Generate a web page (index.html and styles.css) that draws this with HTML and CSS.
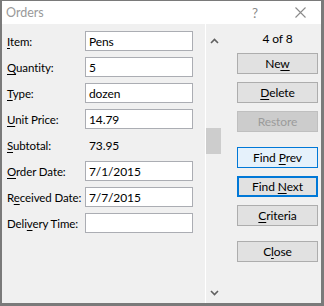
FILE: index.html
```html
<!DOCTYPE html>
<html>
<head>
<meta charset="utf-8">
<link rel="stylesheet" href="styles.css">
</head>
<body>
<div class="window">
  <div class="titlebar">
    <span class="title">Orders</span>
    <span class="help">?</span>
    <svg class="close-x" width="11" height="11" viewBox="0 0 11 11"><path d="M0.5 0.5 L10.5 10.5 M10.5 0.5 L0.5 10.5" stroke="#8a8a8a" stroke-width="1.1" fill="none"/></svg>
  </div>
  <div class="content">
    <div class="form">
      <label class="lbl"><span><u>I</u>tem:</span></label><div class="box">Pens</div>
      <label class="lbl"><span><u>Q</u>uantity:</span></label><div class="box">5</div>
      <label class="lbl"><span><u>T</u>ype:</span></label><div class="box">dozen</div>
      <label class="lbl"><span><u>U</u>nit Price:</span></label><div class="box">14.79</div>
      <label class="lbl"><span><u>S</u>ubtotal:</span></label><div class="value">73.95</div>
      <label class="lbl"><span><u>O</u>rder Date:</span></label><div class="box">7/1/2015</div>
      <label class="lbl"><span>R<u>e</u>ceived Date:</span></label><div class="box">7/7/2015</div>
      <label class="lbl"><span>Deli<u>v</u>ery Time:</span></label><div class="box"></div>
    </div>
    <div class="scroll">
      <svg class="arrow up" width="9" height="6" viewBox="0 0 9 6"><path d="M1 5 L4.5 1.5 L8 5" stroke="#606060" stroke-width="1.6" fill="none"/></svg>
      <div class="thumb"></div>
      <svg class="arrow down" width="9" height="6" viewBox="0 0 9 6"><path d="M1 1 L4.5 4.5 L8 1" stroke="#606060" stroke-width="1.6" fill="none"/></svg>
    </div>
    <div class="side">
      <div class="counter">4 of 8</div>
      <div class="btn"><span>Ne<u>w</u></span></div>
      <div class="btn"><span><u>D</u>elete</span></div>
      <div class="btn disabled"><span>Restore</span></div>
      <div class="btn hover gap"><span>Find <u>P</u>rev</span></div>
      <div class="btn focus"><span>Find <u>N</u>ext</span></div>
      <div class="btn"><span><u>C</u>riteria</span></div>
      <div class="btn gap"><span>C<u>l</u>ose</span></div>
    </div>
  </div>
</div>
</body>
</html>
```

FILE: styles.css
```css
html, body {
  margin: 0;
  padding: 0;
  background: #7a7a7a;
}
body {
  font-family: "Lato", "Noto Sans", sans-serif;
  font-size: 11.5px;
  letter-spacing: -0.1px;
  color: #000;
}
.window {
  width: 324px;
  height: 306px;
  box-sizing: border-box;
  border-style: solid;
  border-color: #7a7a7a;
  border-width: 1px 3px 3px 2px;
  background: #f0f0f0;
  display: flex;
  flex-direction: column;
}
.titlebar {
  height: 23px;
  background: #fff;
  display: flex;
  align-items: center;
  flex-shrink: 0;
}
.title {
  color: #999999;
  font-size: 12.5px;
  letter-spacing: 0;
  margin-left: 4px;
  flex: 1;
}
.help {
  color: #8a8a8a;
  font-size: 13.5px;
  margin-right: 37px;
}
.close-x {
  margin-right: 15px;
}
.content {
  flex: 1;
  display: flex;
}
.form {
  width: 203px;
  box-sizing: border-box;
  padding: 7px 0 0 5px;
  display: grid;
  grid-template-columns: 78px 108px;
  grid-auto-rows: 20px;
  row-gap: 6px;
  align-content: start;
}
.lbl {
  display: flex;
  align-items: center;
  white-space: nowrap;
}
u {
  text-decoration-thickness: 1px;
  text-underline-offset: 2px;
}
.box {
  background: #fff;
  border: 1px solid #abadb3;
  box-sizing: border-box;
  padding-left: 3px;
  display: flex;
  align-items: center;
  font-size: 12px;
}
.value {
  display: flex;
  align-items: center;
  padding-left: 4px;
  font-size: 12px;
}
.scroll {
  width: 17px;
  border-left: 1px solid #ffffff;
  position: relative;
  box-sizing: content-box;
}
.arrow {
  position: absolute;
  left: 4px;
}
.arrow.up { top: 14px; }
.arrow.down { top: 266px; }
.thumb {
  position: absolute;
  left: 0;
  top: 104px;
  width: 15px;
  height: 26px;
  background: #cdcdcd;
}
.side {
  flex: 1;
  padding: 7px 3px 0 14px;
  display: flex;
  flex-direction: column;
  gap: 8px;
}
.counter {
  height: 15px;
  text-align: center;
  line-height: 16px;
  margin-bottom: -1px;
  font-size: 12px;
}
.btn {
  height: 21px;
  box-sizing: border-box;
  background: #e1e1e1;
  border: 1px solid #adadad;
  display: flex;
  align-items: center;
  justify-content: center;
  white-space: nowrap;
  font-size: 12px;
}
.btn.gap { margin-top: 7px; }
.btn.disabled {
  background: #cccccc;
  border-color: #bfbfbf;
  color: #9b9b9b;
}
.btn.hover {
  background: #e5f1fb;
  border-color: #0078d7;
}
.btn.focus {
  border: 2px solid #0078d7;
}
```
